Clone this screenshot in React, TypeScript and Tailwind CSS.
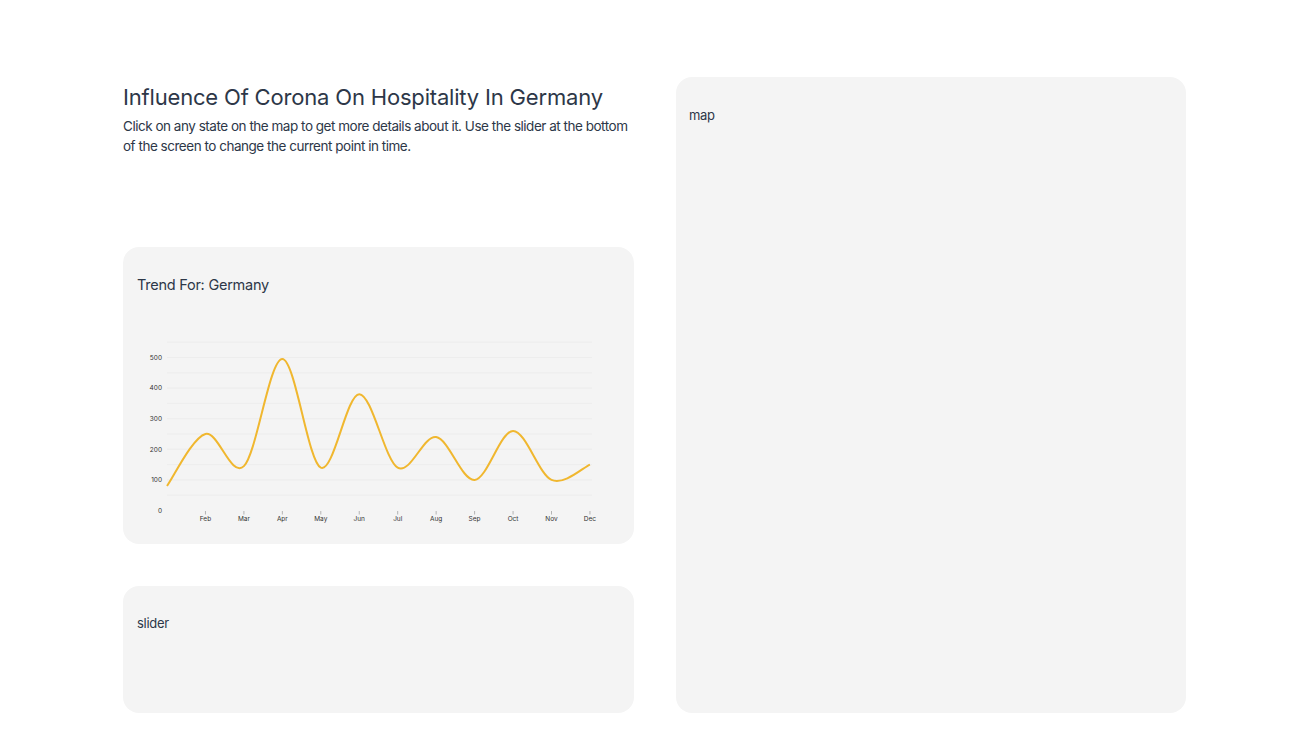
import React from "react";

const data = [80, 250, 145, 495, 140, 380, 140, 240, 100, 260, 100, 150];
const months = ["Jan", "Feb", "Mar", "Apr", "May", "Jun", "Jul", "Aug", "Sep", "Oct", "Nov", "Dec"];

const X0 = 44;
const DX = 38.45;
const yOf = (v: number) => 180.5 - v * 0.306;
const xOf = (i: number) => X0 + i * DX;

function buildPath(): string {
  const pts = data.map((v, i) => [xOf(i), yOf(v)] as [number, number]);
  let d = `M${pts[0][0]},${pts[0][1]}`;
  for (let i = 0; i < pts.length - 1; i++) {
    const p0 = pts[i - 1] || pts[i];
    const p1 = pts[i];
    const p2 = pts[i + 1];
    const p3 = pts[i + 2] || p2;
    const c1x = p1[0] + (p2[0] - p0[0]) / 6;
    const c1y = p1[1] + (p2[1] - p0[1]) / 6;
    const c2x = p2[0] - (p3[0] - p1[0]) / 6;
    const c2y = p2[1] - (p3[1] - p1[1]) / 6;
    d += ` C${c1x},${c1y} ${c2x},${c2y} ${p2[0]},${p2[1]}`;
  }
  return d;
}

function Chart() {
  const grid = [];
  for (let v = 50; v <= 550; v += 50) grid.push(v);
  const labels = [0, 100, 200, 300, 400, 500];
  return (
    <svg width={511} height={200} className="block" style={{ fontFamily: "Inter, sans-serif" }}>
      {grid.map((v) => (
        <line key={v} x1={44} x2={469} y1={yOf(v)} y2={yOf(v)} stroke="#ebebeb" strokeWidth={0.8} />
      ))}
      {labels.map((v) => (
        <text key={v} x={39} y={yOf(v) + 2.3} textAnchor="end" fontSize={6.5} fill="#333333">
          {v}
        </text>
      ))}
      {months.slice(1).map((m, k) => {
        const i = k + 1;
        return (
          <g key={m}>
            <line x1={xOf(i)} x2={xOf(i)} y1={181} y2={184.5} stroke="#888888" strokeWidth={0.6} />
            <text x={xOf(i)} y={190.5} textAnchor="middle" fontSize={6.5} fill="#333333">
              {m}
            </text>
          </g>
        );
      })}
      <path d={buildPath()} fill="none" stroke="#f0b72f" strokeWidth={2} />
    </svg>
  );
}

export default function App() {
  return (
    <div
      className="min-h-screen bg-white text-[#2d3748]"
      style={{ fontFamily: "Inter, 'Noto Sans', sans-serif" }}
    >
      <div className="grid grid-cols-[511px_510px] gap-x-[42px] pl-[123px] pt-[77px]">
        <div className="flex flex-col gap-[42px]">
          <div className="h-[128px]">
            <h1 className="text-[22px] tracking-[-0.18px] leading-[38px] mt-[1px] whitespace-nowrap">Influence Of Corona On Hospitality In Germany</h1>
            <p className="text-[13.5px] tracking-[-0.48px] leading-[20px] text-[#2d3748]">
              Click on any state on the map to get more details about it. Use the slider at the bottom of the screen to change the current point in time.
            </p>
          </div>
          <div className="h-[297px] rounded-[16px] bg-[#f4f4f4] flex flex-col">
            <div className="pl-[14px] pt-[28px] text-[14.5px] tracking-[-0.25px] leading-[20px]">Trend For: Germany</div>
            <div className="mt-[35px]">
              <Chart />
            </div>
          </div>
          <div className="h-[127px] rounded-[16px] bg-[#f4f4f4] pl-[14px] pt-[27px] text-[13px] tracking-[-0.3px] leading-[20px]">
            slider
          </div>
        </div>
        <div className="h-[636px] rounded-[16px] bg-[#f4f4f4] pl-[13px] pt-[28px] text-[13px] tracking-[-0.3px] leading-[20px]">
          map
        </div>
      </div>
    </div>
  );
}
